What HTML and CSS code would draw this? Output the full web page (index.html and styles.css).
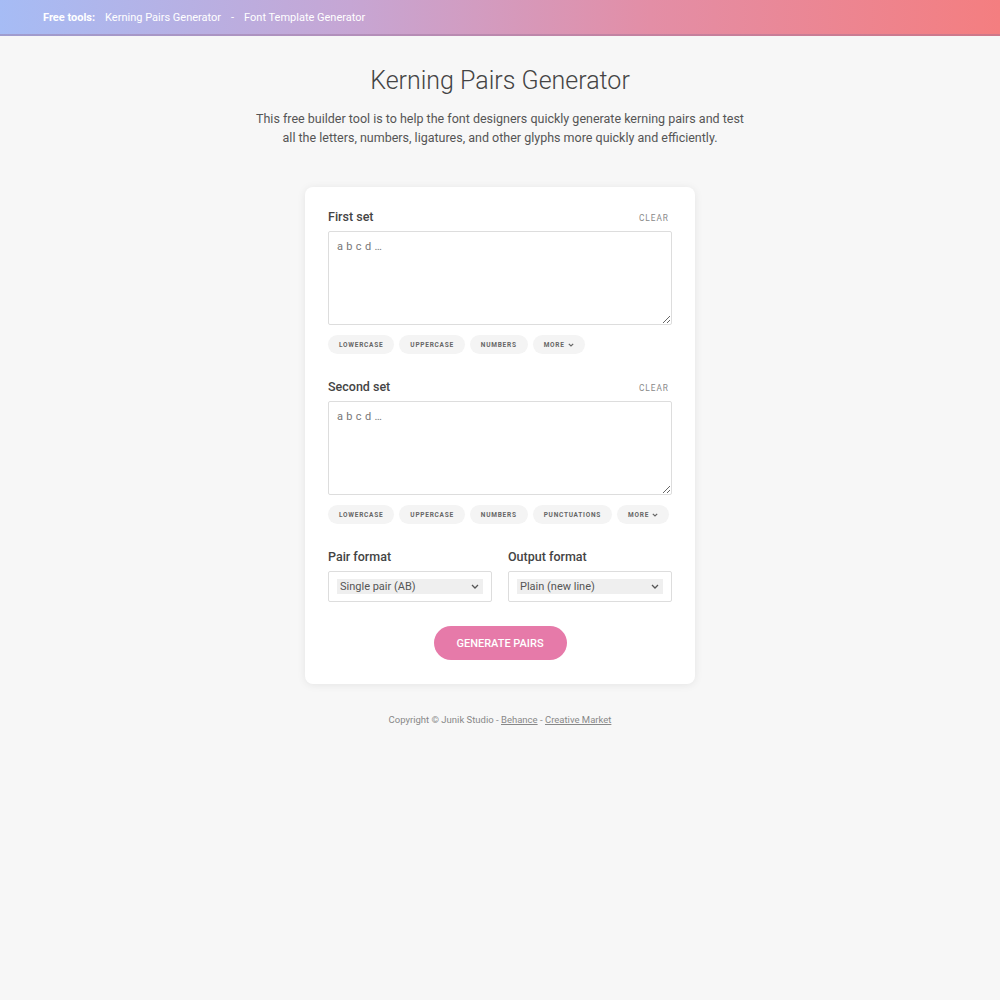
FILE: index.html
```html
<!DOCTYPE html>
<html lang="en">
<head>
	<meta charset="UTF-8">
	<title>Kerning Pairs Generator</title>
	<link rel="stylesheet" href="styles.css">
</head>
<body>

<div class="topbar">
	<b>Free tools:</b>
	<a href="#">Kerning Pairs Generator</a>
	<span class="sep">-</span>
	<a href="#">Font Template Generator</a>
</div>

<div class="intro">
	<h1>Kerning Pairs Generator</h1>
	<p>This free builder tool is to help the font designers quickly generate kerning pairs and test<br>all the letters, numbers, ligatures, and other glyphs more quickly and efficiently.</p>
</div>

<div class="card">
	<div class="set">
		<div class="set-head">
			<label>First set</label>
			<a class="clear" href="#">Clear</a>
		</div>
		<textarea placeholder="a b c d …"></textarea>
		<div class="chips">
			<span class="chip">Lowercase</span>
			<span class="chip">Uppercase</span>
			<span class="chip">Numbers</span>
			<span class="chip">More <svg width="6" height="4" viewBox="0 0 6 4"><path d="M0.8 0.8l2.2 2.2 2.2-2.2" fill="none" stroke="#666" stroke-width="1.2"/></svg></span>
		</div>
	</div>

	<div class="set">
		<div class="set-head">
			<label>Second set</label>
			<a class="clear" href="#">Clear</a>
		</div>
		<textarea placeholder="a b c d …"></textarea>
		<div class="chips">
			<span class="chip">Lowercase</span>
			<span class="chip">Uppercase</span>
			<span class="chip">Numbers</span>
			<span class="chip">Punctuations</span>
			<span class="chip">More <svg width="6" height="4" viewBox="0 0 6 4"><path d="M0.8 0.8l2.2 2.2 2.2-2.2" fill="none" stroke="#666" stroke-width="1.2"/></svg></span>
		</div>
	</div>

	<div class="formats">
		<div class="format">
			<label>Pair format</label>
			<div class="select-box">
				<select>
					<option>Single pair (AB)</option>
				</select>
			</div>
		</div>
		<div class="format">
			<label>Output format</label>
			<div class="select-box">
				<select>
					<option>Plain (new line)</option>
				</select>
			</div>
		</div>
	</div>

	<div class="actions">
		<button class="generate">Generate pairs</button>
	</div>
</div>

<div class="footer">
	Copyright &copy; Junik Studio - <a href="#">Behance</a> - <a href="#">Creative Market</a>
</div>

</body>
</html>
```

FILE: styles.css
```css
body {
	margin: 0;
	background-color: #f7f7f7;
	font-family: Roboto, "Liberation Sans", sans-serif;
	color: #444;
}

.topbar {
	height: 36px;
	box-sizing: border-box;
	padding: 0 43px;
	display: flex;
	align-items: center;
	font-size: 11px;
	color: #fff;
	background: linear-gradient(to right, #a6bcf5, #c6a6d4 35%, #e38ea6 65%, #f47e80);
	border-bottom: 2px solid rgba(150, 110, 150, 0.4);
}

.topbar b {
	font-weight: 700;
	margin-right: 10px;
}

.topbar a {
	color: #fff;
	text-decoration: none;
}

.topbar .sep {
	margin: 0 10px 0 10px;
}

.intro {
	text-align: center;
}

.intro h1 {
	margin: 29px 0 0;
	font-size: 25px;
	font-weight: 300;
	color: #444;
	line-height: 32px;
}

.intro p {
	margin: 13px 0 0;
	font-size: 12.5px;
	line-height: 18.5px;
	color: #555;
}

.card {
	width: 390px;
	box-sizing: border-box;
	margin: 40px auto 0;
	background: #fff;
	border-radius: 8px;
	box-shadow: 0 1px 8px rgba(0, 0, 0, 0.08);
	padding: 22px 23px 24px;
}

.set {
	margin-bottom: 25px;
}

.set-head {
	display: flex;
	justify-content: space-between;
	align-items: center;
	margin-bottom: 7px;
}

label {
	font-size: 12.5px;
	font-weight: 500;
	color: #444;
}

.clear {
	font-size: 8.3px;
	letter-spacing: 1px;
	text-transform: uppercase;
	color: #888;
	text-decoration: none;
	margin-right: 3px;
	padding-top: 3px;
}

textarea {
	display: block;
	width: 100%;
	height: 94px;
	box-sizing: border-box;
	border: 1px solid #ddd;
	border-radius: 2px;
	padding: 8px 8px;
	font-family: Roboto, "Liberation Sans", sans-serif;
	font-size: 11px;
	letter-spacing: 0.3px;
	color: #444;
	resize: vertical;
}

textarea::placeholder {
	color: #777;
}

.chips {
	display: flex;
	gap: 5px;
	margin-top: 10px;
}

.chip {
	display: inline-flex;
	align-items: center;
	gap: 3px;
	height: 19px;
	padding: 0 11px;
	border-radius: 10px;
	background: #f4f4f4;
	font-size: 6.5px;
	font-weight: 700;
	letter-spacing: 0.75px;
	text-transform: uppercase;
	color: #666;
}

.formats {
	display: flex;
	gap: 16px;
	margin-top: 0;
}

.format {
	flex: 1;
}

.format label {
	display: block;
	margin-bottom: 7px;
}

.select-box {
	border: 1px solid #ddd;
	border-radius: 2px;
	height: 31px;
	box-sizing: border-box;
	padding: 0 8px;
	display: flex;
	align-items: center;
}

.select-box select {
	-webkit-appearance: none;
	appearance: none;
	width: 100%;
	height: 15px;
	border: none;
	border-radius: 0;
	background: #efefef url("data:image/svg+xml;utf8,<svg xmlns='http://www.w3.org/2000/svg' width='8' height='5' viewBox='0 0 8 5'><path d='M1 1l3 3 3-3' fill='none' stroke='%23555' stroke-width='1.3'/></svg>") no-repeat right 4px center;
	font-family: Roboto, "Liberation Sans", sans-serif;
	font-size: 11px;
	color: #555;
	padding: 0 0 0 3px;
	outline: none;
}

.actions {
	text-align: center;
	margin-top: 24px;
}

.generate {
	width: 133px;
	height: 34px;
	border: none;
	border-radius: 17px;
	background: #e67aa9;
	color: #fff;
	font-family: Roboto, "Liberation Sans", sans-serif;
	font-size: 11px;
	font-weight: 500;
	text-transform: uppercase;
}

.footer {
	text-align: center;
	margin-top: 30px;
	font-size: 9.5px;
	color: #888;
}

.footer a {
	color: #888;
}
```
